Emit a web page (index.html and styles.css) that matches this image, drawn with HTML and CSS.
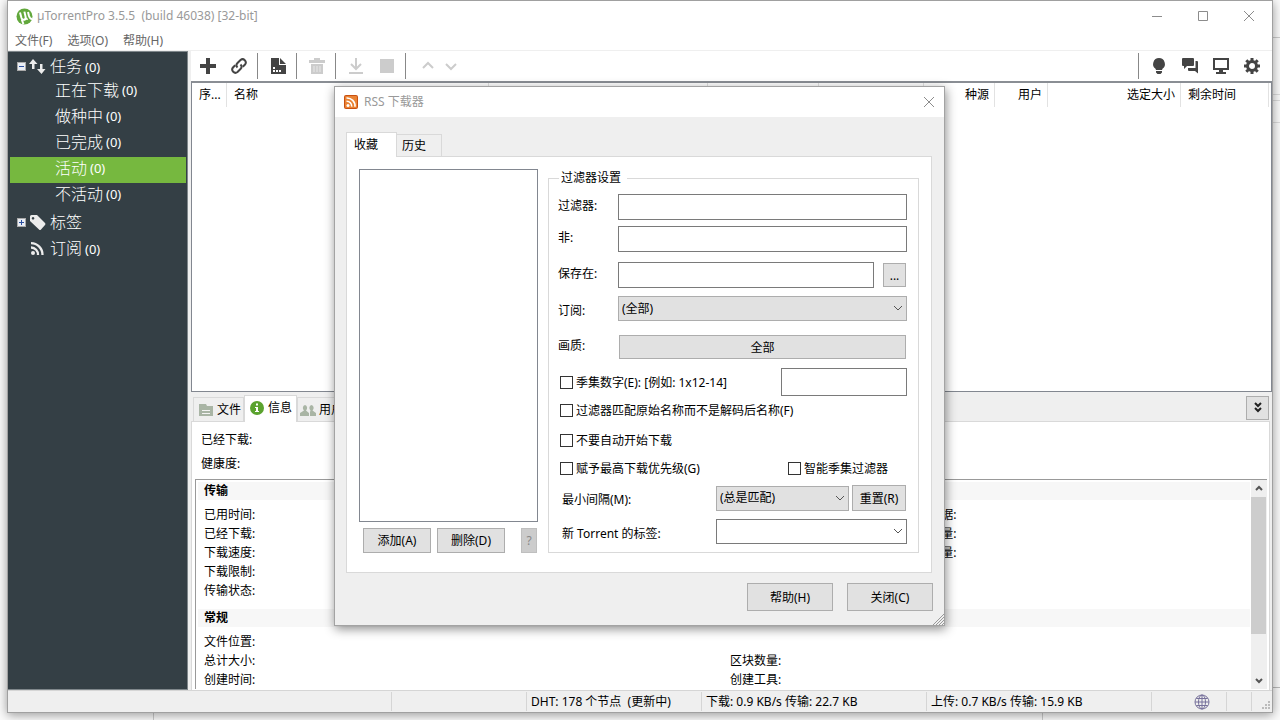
FILE: index.html
```html
<!DOCTYPE html>
<html lang="zh-CN">
<head>
<meta charset="utf-8">
<title>µTorrentPro</title>
<link rel="stylesheet" href="styles.css">
</head>
<body>
<main class="desktop">
<section class="window">
  <header class="titlebar">
    <svg class="logo" viewBox="0 0 17 17"><circle cx="8.500" cy="8.500" r="8" fill="#62a83c"/><path d="M4 4.500l1.500 5.500q.8 2.300 2.800 1.700 1.800-.6 1.300-2.800L8.400 3.600M9.600 9.500q.6 1.800 2 1.300M12 4l1 4q1 3 3 3" fill="none" stroke="#fff" stroke-width="2"/><path d="M5.800 11.500l1.600 4.600" stroke="#fff" stroke-width="2"/></svg>
    <h1 class="title">µTorrentPro 3.5.5&nbsp; (build 46038) [32-bit]</h1>
    <div class="captions">
      <button class="caption" aria-label="最小化"><svg viewBox="0 0 12 12"><path d="M1 6.500h10"/></svg></button>
      <button class="caption" aria-label="最大化"><svg viewBox="0 0 12 12"><path d="M1.500 1.500h9v9h-9z"/></svg></button>
      <button class="caption" aria-label="关闭窗口"><svg viewBox="0 0 12 12"><path d="M1 1l10 10M11 1L1 11"/></svg></button>
    </div>
  </header>
  <nav class="menubar">
    <button class="menu">文件(F)</button>
    <button class="menu">选项(O)</button>
    <button class="menu">帮助(H)</button>
  </nav>
  <div class="workspace">
    <aside class="sidebar">
      <ul class="tree">
        <li class="node"><span class="toggle"><svg viewBox="0 0 7 7"><path d="M1 3.500h5"/></svg></span><svg class="node-icon" viewBox="0 0 17 17"><path d="M4 1L0 6h3v5h2.500V6h3zM12.500 16l4-5h-3V6H11v5H8z" fill="#ececec"/></svg><span class="name">任务</span><span class="count">(0)</span></li>
        <li class="node child"><span class="name">正在下载</span><span class="count">(0)</span></li>
        <li class="node child"><span class="name">做种中</span><span class="count">(0)</span></li>
        <li class="node child"><span class="name">已完成</span><span class="count">(0)</span></li>
        <li class="node child selected"><span class="name">活动</span><span class="count">(0)</span></li>
        <li class="node child"><span class="name">不活动</span><span class="count">(0)</span></li>
        <li class="node"><span class="toggle"><svg viewBox="0 0 7 7"><path d="M1 3.500h5M3.500 1v5"/></svg></span><svg class="node-icon" viewBox="0 0 17 17"><path d="M1 2.500Q1 1 2.500 1H8l8 8q1 1 0 2l-4 4.500q-1 1-2 0L1 7zM4 3a1.300 1.300 0 1 0 .1 0z" fill="#ececec" fill-rule="evenodd"/></svg><span class="name">标签</span></li>
        <li class="node"><span class="toggle blank"></span><svg class="node-icon" viewBox="0 0 17 17"><circle cx="4" cy="13" r="2" fill="#ececec"/><path d="M2 7.500a7 7 0 0 1 7 7.500M2 3.200a11.500 11.500 0 0 1 11.500 11.800" fill="none" stroke="#ececec" stroke-width="2.300"/></svg><span class="name">订阅</span><span class="count">(0)</span></li>
      </ul>
    </aside>
    <div class="content">
      <div class="toolbar">
        <button class="tool" aria-label="添加"><svg viewBox="0 0 18 18"><path d="M7 1h4v6h6v4h-6v6H7v-6H1V7h6z"/></svg></button>
        <button class="tool" aria-label="添加链接"><svg viewBox="0 0 18 18"><g fill="none" stroke="#444" stroke-width="2"><path d="M7.500 10.500a3.200 3.200 0 0 1 0-4.500l3-3a3.200 3.200 0 0 1 4.500 4.500l-2.200 2.200"/><path d="M10.500 7.500a3.200 3.200 0 0 1 0 4.500l-3 3A3.200 3.200 0 0 1 3 10.500l2.200-2.200"/></g></svg></button>
        <span class="rule"></span>
        <button class="tool" aria-label="创建种子"><svg viewBox="0 0 18 18"><path d="M2 1h8v7h7v9H2zM11 1l6 6h-6z"/><path d="M4 10h2v2H4zM4 13h2v2H4zM7 13h2v2H7zM10 13h2v2h-2z" fill="#fff"/></svg></button>
        <span class="rule"></span>
        <button class="tool dim" aria-label="删除任务" disabled><svg viewBox="0 0 18 18"><path d="M1 3h5V1h6v2h5v3H1zM3 7h12v10H3z"/><path d="M6 9v6M9 9v6M12 9v6" stroke="#e8e8e8"/></svg></button>
        <span class="rule"></span>
        <button class="tool dim" aria-label="开始" disabled><svg viewBox="0 0 18 18"><path d="M9 1v11M4 7l5 5 5-5M2 16h14" fill="none" stroke="#ccc" stroke-width="2"/></svg></button>
        <button class="tool dim" aria-label="停止" disabled><svg viewBox="0 0 18 18"><path d="M2 2h14v14H2z"/></svg></button>
        <span class="rule"></span>
        <span class="order">
          <button class="tool small" aria-label="上移" disabled><svg viewBox="0 0 18 18"><path d="M4 11l5-5 5 5" fill="none" stroke="#ccc" stroke-width="2"/></svg></button>
          <button class="tool small" aria-label="下移" disabled><svg viewBox="0 0 18 18"><path d="M4 7l5 5 5-5" fill="none" stroke="#ccc" stroke-width="2"/></svg></button>
        </span>
        <span class="spring"></span>
        <span class="rule"></span>
        <button class="tool" aria-label="提示"><svg viewBox="0 0 18 18"><path d="M9 1a6 6 0 0 1 3.500 10.800L12 13H6l-.5-1.200A6 6 0 0 1 9 1zM6 14h6v1.500L10.500 17h-3L6 15.500z"/></svg></button>
        <button class="tool" aria-label="聊天"><svg viewBox="0 0 18 18"><path d="M2 1h10q1 0 1 1v6q0 1-1 1H6l-3 3V9H2Q1 9 1 8V2q0-1 1-1z"/><path d="M14.500 4H16q1 0 1 1v11.500L14 14H8q-1 0-1-1v-2h7.500z"/></svg></button>
        <button class="tool" aria-label="远程"><svg viewBox="0 0 18 18"><path d="M2 2h14v10H2z" fill="none" stroke="#444" stroke-width="2"/><path d="M7 13h4v2h3v2H4v-2h3z"/></svg></button>
        <button class="tool" aria-label="设置"><svg viewBox="0 0 18 18"><circle cx="9" cy="9" r="4.500" fill="none" stroke="#444" stroke-width="3"/><path d="M9 1v3M9 14v3M1 9h3M14 9h3M3.300 3.300l2 2M12.700 12.700l2 2M3.300 14.700l2-2M12.700 5.300l2-2" stroke="#444" stroke-width="3"/></svg></button>
      </div>
      <div class="torrents">
        <table class="torrent-table">
          <colgroup><col class="w-order"><col class="w-name"><col class="w-wide"><col class="w-done"><col class="w-state"><col class="w-seed"><col class="w-peer"><col class="w-size"><col class="w-time"><col></colgroup>
          <thead><tr><th>序...</th><th>名称</th><th></th><th></th><th></th><th class="right">种源</th><th class="right">用户</th><th class="right">选定大小</th><th>剩余时间</th><th class="last"></th></tr></thead>
        </table>
      </div>
      <div class="detail-tabs" role="tablist">
        <button class="dtab" role="tab"><svg viewBox="0 0 16 16"><path d="M1 2h7l1 2h6v10H1z" fill="#a9b5a5"/><path d="M4 8.500h8M4 11.500h8" stroke="#f4f4f4"/></svg>文件</button>
        <button class="dtab current" role="tab" aria-selected="true"><svg viewBox="0 0 16 16"><circle cx="8" cy="8" r="7" fill="#5ba32f"/><path d="M7 3.500h2v2H7zM6 7h3v4h1v1H6v-1h1V8H6z" fill="#fff"/></svg>信息</button>
        <button class="dtab" role="tab"><svg viewBox="0 0 16 16"><path d="M5 3a2.500 3 0 0 1 1 5.500L9 11v3H0v-3l4-2.500A2.500 3 0 0 1 5 3zM11.500 3a2.500 3 0 0 1 1 5.500L16 11v3h-6v-4l.500-1.500A2.500 3 0 0 1 11.500 3z" fill="#a9b5a5"/></svg>用户</button>
        <span class="spring"></span>
        <button class="collapse" aria-label="折叠"><svg viewBox="0 0 10 12"><path d="M2 1l3 3 3-3M2 6l3 3 3-3" fill="none" stroke="#222" stroke-width="2"/></svg></button>
      </div>
      <div class="details">
        <p class="summary">已经下载:</p>
        <p class="summary">健康度:</p>
        <div class="info">
          <div class="info-body">
            <h2 class="group">传输</h2>
            <div class="facts thirds">
              <span>已用时间:</span><span></span><span>浪费数据:</span>
              <span>已经下载:</span><span></span><span>种子数量:</span>
              <span>下载速度:</span><span></span><span>用户数量:</span>
              <span>下载限制:</span><span></span><a class="share" href="#">分享率:</a>
              <span>传输状态:</span><span></span><span></span>
            </div>
            <h2 class="group">常规</h2>
            <div class="facts halves">
              <span>文件位置:</span><span></span>
              <span>总计大小:</span><span>区块数量:</span>
              <span>创建时间:</span><span>创建工具:</span>
            </div>
          </div>
          <div class="scrollbar">
            <svg viewBox="0 0 16 17"><path d="M5 10l3-3 3 3" /></svg>
            <span class="thumb"></span>
            <svg viewBox="0 0 16 17"><path d="M5 7l3 3 3-3"/></svg>
          </div>
        </div>
      </div>
    </div>
  </div>
  <footer class="statusbar">
    <span class="cell c-first"></span>
    <span class="cell c-second"></span>
    <span class="cell c-dht">DHT: 178 个节点&nbsp; (更新中)</span>
    <span class="cell c-rate">下载: 0.9 KB/s 传输: 22.7 KB</span>
    <span class="cell c-rate">上传: 0.7 KB/s 传输: 15.9 KB</span>
    <span class="cell c-globe"><svg viewBox="0 0 16 16"><circle cx="8" cy="8" r="7"/><ellipse cx="8" cy="8" rx="3.500" ry="7"/><path d="M8 1v14M1 8h14M2.300 4.500h11.400M2.300 11.500h11.400"/></svg></span>
    <span class="cell c-small"></span>
    <svg class="grip" viewBox="0 0 10 10"><path d="M7 0h2v2H7zM4 3h2v2H4zM7 3h2v2H7zM1 6h2v2H1zM4 6h2v2H4zM7 6h2v2H7z"/></svg>
  </footer>
</section>

<section class="dialog" role="dialog" aria-labelledby="dlg-title">
  <header class="dialog-title">
    <svg class="rss" viewBox="0 0 14 14"><rect width="14" height="14" rx="2" fill="#c9500f"/><rect x="1" y="1" width="12" height="12" rx="1" fill="#ea8334"/><circle cx="4" cy="10.500" r="1.500" fill="#fff"/><path d="M2.500 6.200a5 5 0 0 1 5.200 5.500M2.500 3a8 8 0 0 1 8.500 8.700" fill="none" stroke="#fff" stroke-width="1.600"/></svg>
    <h2 class="title" id="dlg-title">RSS 下载器</h2>
    <button class="caption" aria-label="关闭对话框"><svg viewBox="0 0 12 12"><path d="M1 1l10 10M11 1L1 11"/></svg></button>
  </header>
  <div class="dialog-body">
    <div class="tabs" role="tablist">
      <button class="tab current" role="tab" aria-selected="true">收藏</button>
      <button class="tab" role="tab">历史</button>
    </div>
    <div class="panel">
      <div class="favorites">
        <div class="favorite-list"></div>
        <div class="favorite-actions">
          <button class="btn act">添加(A)</button>
          <button class="btn act">删除(D)</button>
          <button class="btn query" disabled>?</button>
        </div>
      </div>
      <fieldset class="settings">
        <legend>过滤器设置</legend>
        <div class="row"><label class="lbl" for="filter">过滤器:</label><input class="text" id="filter" type="text"></div>
        <div class="row g6"><label class="lbl" for="not">非:</label><input class="text" id="not" type="text"></div>
        <div class="row g10"><label class="lbl" for="save">保存在:</label><input class="text" id="save" type="text"><button class="btn browse" aria-label="浏览">...</button></div>
        <div class="row g8"><label class="lbl low" for="feed">订阅:</label><select class="select" id="feed"><option>(全部)</option></select></div>
        <div class="row g14"><label class="lbl" for="quality">画质:</label><button class="btn quality" id="quality">全部</button></div>
        <div class="row g9"><input class="check" type="checkbox" id="ep"><label class="fill" for="ep">季集数字(E): [例如: 1x12-14]</label><input class="text episode" type="text" aria-label="季集数字"></div>
        <div class="row g6"><input class="check" type="checkbox" id="orig"><label for="orig">过滤器匹配原始名称而不是解码后名称(F)</label></div>
        <div class="row g14"><input class="check" type="checkbox" id="noauto"><label for="noauto">不要自动开始下载</label></div>
        <div class="row g12"><input class="check" type="checkbox" id="prio"><label class="fill" for="prio">赋予最高下载优先级(G)</label><span class="smart"><input class="check" type="checkbox" id="smart"><label for="smart">智能季集过滤器</label></span></div>
        <div class="row g9"><label class="fill inset" for="interval">最小间隔(M):</label><select class="select interval" id="interval"><option>(总是匹配)</option></select><button class="btn reset">重置(R)</button></div>
        <div class="row g8"><label class="fill inset" for="tag">新 Torrent 的标签:</label><select class="select tag" id="tag"><option></option></select></div>
      </fieldset>
    </div>
    <div class="dialog-actions">
      <button class="btn main">帮助(H)</button>
      <button class="btn main">关闭(C)</button>
    </div>
  </div>
  <svg class="sizer" viewBox="0 0 12 12"><path d="M1 12L12 1M4 12l8-8M7 12l5-5M10 12l2-2"/></svg>
</section>
</main>
</body>
</html>
```
FILE: styles.css
```css
* { box-sizing: border-box; }
body, h1, h2, p, ul { margin: 0; padding: 0; }
body, button, input, select {
  font: 12px/16px "Noto Sans", "Noto Sans CJK SC", sans-serif;
  color: #000;
}
button { padding: 0; border: 0; background: none; white-space: nowrap; }
svg { display: block; flex: none; }

.desktop {
  position: relative;
  height: 100vh;
  min-height: 700px;
  overflow: hidden;
  background:
    linear-gradient(#ccc, #ccc) 100% 37px / 8px 1px no-repeat,
    linear-gradient(#ddd, #ddd) 100% 94px / 8px 1px no-repeat,
    linear-gradient(#ddd, #ddd) 100% 100px / 8px 1px no-repeat,
    linear-gradient(#ddd, #ddd) 100% 122px / 8px 1px no-repeat,
    linear-gradient(#bbb, #bbb) 100% 687px / 8px 1px no-repeat,
    linear-gradient(#ccc, #ccc) 153px 100% / 1px 8px no-repeat,
    linear-gradient(#ccc, #ccc) 1042px 100% / 1px 8px no-repeat,
    #fbfbfb;
}
.window {
  position: absolute;
  inset: 0 7px 7px 7px;
  display: flex;
  flex-direction: column;
  border: 1px solid #a0a0a0;
  background: #efefef;
  box-shadow: 0 2px 10px rgba(0, 0, 0, .4);
}

.titlebar { display: flex; align-items: center; height: 30px; padding-left: 8px; background: #fff; }
.logo { width: 17px; height: 17px; margin-right: 4px; }
.title { flex: 1; font-size: 12px; font-weight: 400; color: #999; }
.captions { display: flex; }
.caption { display: grid; place-items: center; width: 46px; height: 28px; }
.caption svg { width: 12px; height: 12px; fill: none; stroke: #8c8c8c; }
.menubar { display: flex; gap: 15px; height: 20px; padding: 1px 7px 0; background: #fff; border-bottom: 1px solid #efefef; }
.menu { color: #666; }

.workspace { flex: 1; display: flex; min-height: 0; gap: 3px; }
.sidebar { width: 180px; padding: 1px; border: 1px solid #7f878b; border-left: 0; background: #343f45; }
.tree { list-style: none; }
.node { display: flex; align-items: center; height: 26px; margin-left: 1px; padding-left: 7px; color: #fff; font-size: 16px; font-weight: 300; }
.child { padding: 0 0 5px 45px; }
.selected { background: #76b83f; }
.toggle { width: 9px; height: 9px; margin-right: 3px; background: #e9eef5; border: 1px solid #aaa; }
.toggle svg { width: 7px; height: 7px; fill: none; stroke: #2b4fa0; }
.blank { visibility: hidden; }
.node-icon { width: 17px; height: 17px; margin-right: 4px; }
.count { margin-left: 3px; padding-top: 1px; font-size: 13px; font-weight: 400; }

.content { flex: 1; min-width: 0; display: flex; flex-direction: column; }
.toolbar { display: flex; align-items: center; height: 30px; padding: 0 5px 0 1px; background: #fff; flex: none; }
.tool { display: grid; place-items: center; width: 31px; height: 28px; }
.tool svg { width: 18px; height: 18px; fill: #444; }
.tool.dim svg { fill: #ccc; }
.tool.small { width: 23px; }
.order { display: flex; padding-left: 6px; }
.rule { width: 1px; height: 26px; margin: 0 4px 0 3px; background: #888; }
.spring { flex: 1; }

.torrents { flex: 1; min-height: 0; overflow: hidden; border: 1px solid #828790; border-top: 2px solid #8a8e94; background: #fff; }
.torrent-table { width: 100%; table-layout: fixed; border-collapse: separate; border-spacing: 0; }
.torrent-table th { height: 24px; padding: 0 5px 0 7px; border-right: 1px solid #e2e2e2; font-weight: 400; text-align: left; white-space: nowrap; }
.torrent-table th.right { text-align: right; }
.torrent-table th.last { border: 0; padding: 0; }
.w-order { width: 35px; }
.w-name { width: 262px; }
.w-wide { width: 219px; }
.w-done { width: 111px; }
.w-state { width: 105px; }
.w-seed { width: 71px; }
.w-peer { width: 53px; }
.w-size { width: 133px; }
.w-time { width: 88px; }

.detail-tabs { display: flex; align-items: flex-end; height: 29px; padding: 0 3px 0 2px; flex: none; }
.dtab { display: flex; align-items: center; gap: 3px; height: 24px; padding: 0 2px 0 4px; border: 1px solid #d9d9d9; border-bottom: 0; }
.dtab svg { width: 16px; height: 16px; }
.dtab.current { position: relative; z-index: 1; height: 27px; margin-bottom: -1px; padding: 0 4px 3px; background: #fff; }
.dtab:nth-of-type(2) ~ .dtab { padding-left: 2px; }
.collapse { display: grid; place-items: center; width: 23px; height: 24px; margin-bottom: 1px; border: 1px solid #adadad; background: #e1e1e1; }
.collapse svg { width: 10px; height: 12px; }

.details { display: flex; flex-direction: column; height: 269px; margin-right: 2px; padding: 6px 2px 1px 3px; border: 1px solid #d9d9d9; border-bottom: 0; background: #fff; flex: none; }
.summary { height: 24px; padding: 4px 6px; }
.info { flex: 1; min-height: 0; display: flex; margin-top: 3px; border: 1px solid #999; border-width: 1px 0 0 1px; }
.info-body { flex: 1; padding: 2px 1px 0 2px; overflow: hidden; }
.group { height: 18px; margin-bottom: 5px; padding-left: 6px; background: #f7f7f7; font-size: 12px; line-height: 18px; font-weight: 700; }
.facts { display: grid; grid-auto-rows: 19px; margin-bottom: 9px; line-height: 19px; }
.facts > * { padding-left: 6px; }
.thirds { grid-template-columns: repeat(3, 1fr); }
.halves { grid-template-columns: 1fr 1fr; }
.share { color: #0a84b8; text-decoration: none; }
.scrollbar { display: flex; flex-direction: column; width: 16px; background: #efefef; }
.scrollbar svg { width: 16px; height: 17px; fill: none; stroke: #555; stroke-width: 2; }
.scrollbar svg:last-child { margin-top: auto; }
.thumb { height: 137px; margin-right: 1px; background: #cdcdcd; }

.statusbar { display: flex; align-items: center; height: 22px; border-top: 1px solid #d5d5d5; flex: none; }
.cell { flex: none; height: 19px; padding: 2px 4px 0; border-right: 1px solid #d5d5d5; white-space: nowrap; }
.c-first { flex: 1; }
.c-second { width: 135px; }
.c-dht { width: 175px; }
.c-rate { width: 225px; }
.c-globe { display: grid; place-items: center; width: 75px; padding: 0 0 0 26px; }
.c-globe svg { width: 16px; height: 16px; fill: none; stroke: #77719b; }
.c-small { width: 25px; }
.grip { width: 10px; height: 10px; margin: 8px 1px 0 9px; fill: #bbb; }

.dialog {
  position: absolute;
  left: 334px;
  top: 86px;
  width: 611px;
  border: 1px solid #a3a3a3;
  background: #efefef;
  box-shadow: 1px 3px 10px rgba(0, 0, 0, .45);
}
.dialog-title { display: flex; align-items: center; height: 30px; padding-left: 9px; background: #fff; }
.dialog-title .caption { width: 31px; }
.rss { width: 14px; height: 14px; margin-right: 6px; }
.dialog-body { padding: 15px 12px 14px 11px; }
.tabs { display: flex; align-items: flex-end; height: 24px; }
.tab { width: 45px; height: 22px; padding-left: 5px; border: 1px solid #d9d9d9; border-bottom: 0; border-left: 0; text-align: left; }
.tab.current { position: relative; z-index: 1; width: 51px; height: 25px; margin-bottom: -1px; padding-left: 7px; border-left: 1px solid #d9d9d9; background: #fff; }
.panel { display: flex; gap: 10px; padding: 12px 12px 19px; border: 1px solid #d9d9d9; background: #fff; }
.favorites { display: flex; flex-direction: column; width: 179px; gap: 6px; }
.favorite-list { flex: 1; border: 1px solid #828790; }
.favorite-actions { display: flex; gap: 6px; padding: 0 1px 0 4px; }
.btn { flex: none; padding-top: 1px; border: 1px solid #adadad; background: #e1e1e1; text-align: center; }
.act { width: 68px; height: 25px; }
.query { width: 16px; height: 25px; margin-left: auto; border-color: #bfbfbf; background: #ccc; color: #888; }

.settings { flex: 1; min-width: 0; margin: 0; padding: 7px 11px 8px 9px; border: 1px solid #d9d9d9; }
.settings legend { margin-left: 1px; padding: 0 6px 0 2px; line-height: 18px; }
.row { display: flex; align-items: center; white-space: nowrap; }
.g6 { margin-top: 6px; }
.g8 { margin-top: 8px; }
.g9 { margin-top: 9px; }
.g10 { margin-top: 10px; }
.g12 { margin-top: 12px; }
.g14 { margin-top: 14px; }
.lbl { width: 60px; padding-bottom: 2px; }
.lbl.low { padding: 5px 0 0; }
.fill { flex: 1; }
.check + label { padding-top: 2px; line-height: 14px; }
.inset { padding: 4px 0 0 4px; }
.text { flex: 1; min-width: 0; height: 26px; padding: 0 4px; border: 1px solid #7a7a7a; background: #fff; }
.browse { width: 23px; height: 24px; margin: 0 1px 0 9px; }
.episode { flex: none; width: 126px; height: 28px; }
.quality { flex: 1; height: 24px; margin: 0 1px; }
.check { appearance: none; width: 13px; height: 13px; margin: 0 3px 0 2px; border: 1px solid #333; background: #fff; }
.smart { display: flex; align-items: center; width: 121px; }
.select {
  appearance: none;
  flex: 1;
  height: 25px;
  padding: 1px 20px 1px 3px;
  border: 1px solid #adadad;
  border-radius: 0;
  background: #e1e1e1 url("data:image/svg+xml,%3Csvg xmlns='http://www.w3.org/2000/svg' width='10' height='7'%3E%3Cpath d='M1 1l4 4 4-4' fill='none' stroke='%23555'/%3E%3C/svg%3E") right 3px center no-repeat;
}
.interval { flex: none; width: 133px; }
.reset { width: 54px; height: 26px; margin: 0 1px 0 3px; }
.select.tag { flex: none; width: 191px; border-color: #7a7a7a; background-color: #fff; }
.dialog-actions { display: flex; justify-content: flex-end; gap: 14px; padding-top: 10px; margin-right: -1px; }
.main { width: 86px; height: 28px; }
.sizer { position: absolute; right: 0; bottom: 0; width: 12px; height: 12px; stroke: #999; }
```
